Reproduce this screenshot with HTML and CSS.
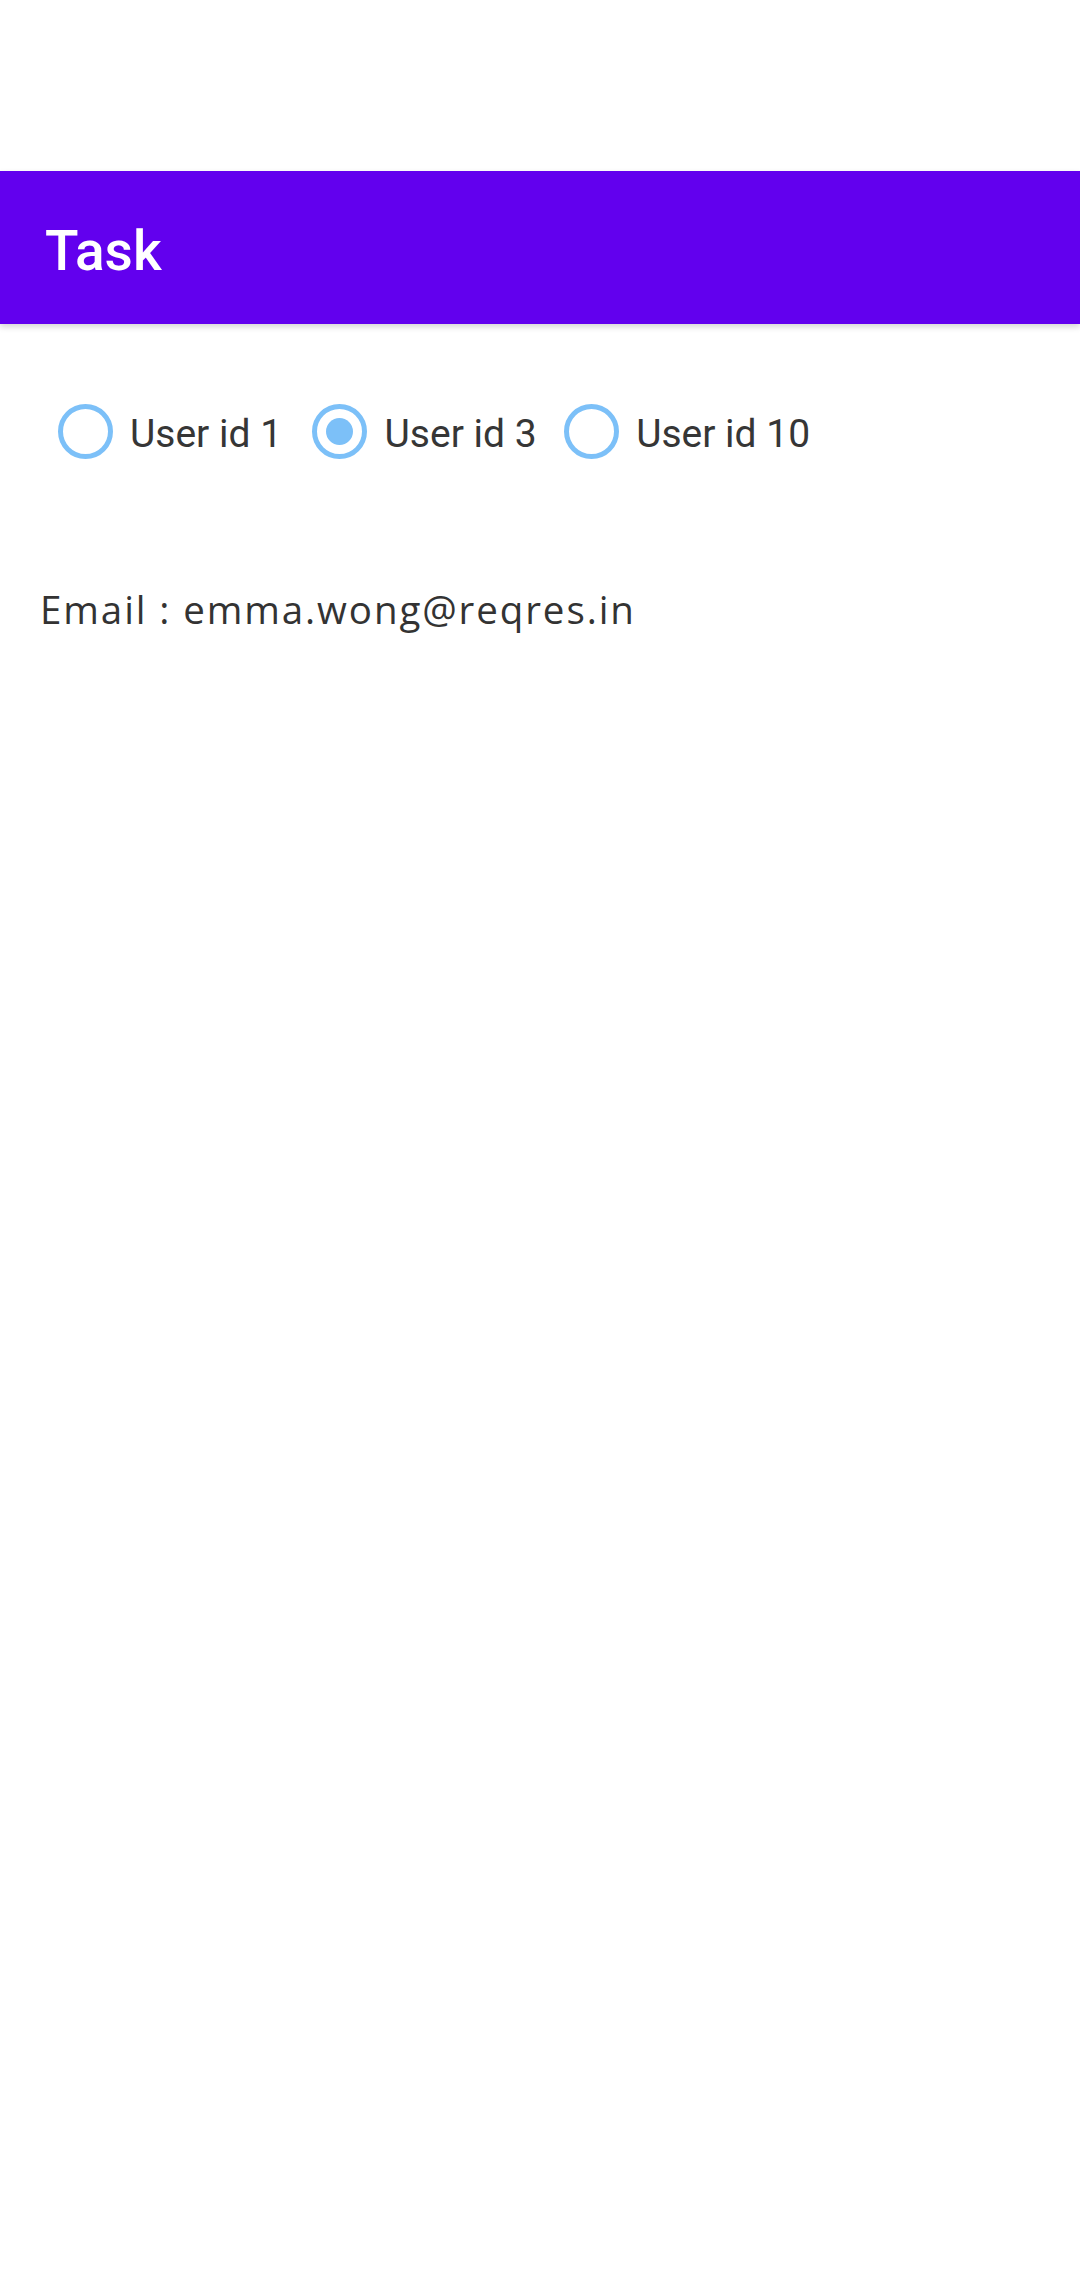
FILE: index.html
```html
<!DOCTYPE html>
<html>
<head>
<meta charset="utf-8">
<link rel="stylesheet" href="styles.css">
</head>
<body>
<div class="status"></div>
<header class="appbar"><span class="title">Task</span></header>
<main class="content">
  <div class="radios">
    <label class="radio r1"><span class="circle"></span><span class="label">User id 1</span></label>
    <label class="radio r2"><span class="circle checked"></span><span class="label">User id 3</span></label>
    <label class="radio r3"><span class="circle"></span><span class="label">User id 10</span></label>
  </div>
  <p class="email">Email : emma.wong@reqres.in</p>
</main>
</body>
</html>
```
FILE: styles.css
```css
html, body {
  margin: 0;
  padding: 0;
  background: #ffffff;
  width: 1080px;
  height: 2280px;
  overflow: hidden;
}
.status {
  height: 171px;
}
.appbar {
  height: 153px;
  box-sizing: border-box;
  padding: 8px 0 0 45px;
  background: #6200ee;
  display: flex;
  align-items: center;
  box-shadow: 0 3px 6px rgba(0, 0, 0, 0.16);
  position: relative;
  z-index: 1;
}
.title {
  font-family: Roboto, sans-serif;
  font-weight: 500;
  font-size: 55px;
  line-height: 1;
  color: #ffffff;
}
.content {
  padding: 0;
}
.radios {
  display: flex;
  align-items: center;
  padding: 80px 0 0 57.5px;
  height: 55px;
}
.radio {
  display: flex;
  align-items: center;
}
.r1 { margin-right: 30px; }
.r2 { margin-right: 27px; }
.circle {
  width: 55px;
  height: 55px;
  box-sizing: border-box;
  border: 5.5px solid #7cc0f8;
  border-radius: 50%;
  display: flex;
  align-items: center;
  justify-content: center;
}
.circle.checked::after {
  content: "";
  width: 27px;
  height: 27px;
  border-radius: 50%;
  background: #7cc0f8;
}
.label {
  font-family: Roboto, sans-serif;
  font-size: 39px;
  color: #363636;
  margin-left: 17.5px;
  line-height: 1;
  margin-top: 5px;
}
.email {
  margin: 130.5px 0 0 40px;
  font-family: "Open Sans", sans-serif;
  font-size: 38.5px;
  color: #333333;
  line-height: 1;
  letter-spacing: 1.9px;
}
```
